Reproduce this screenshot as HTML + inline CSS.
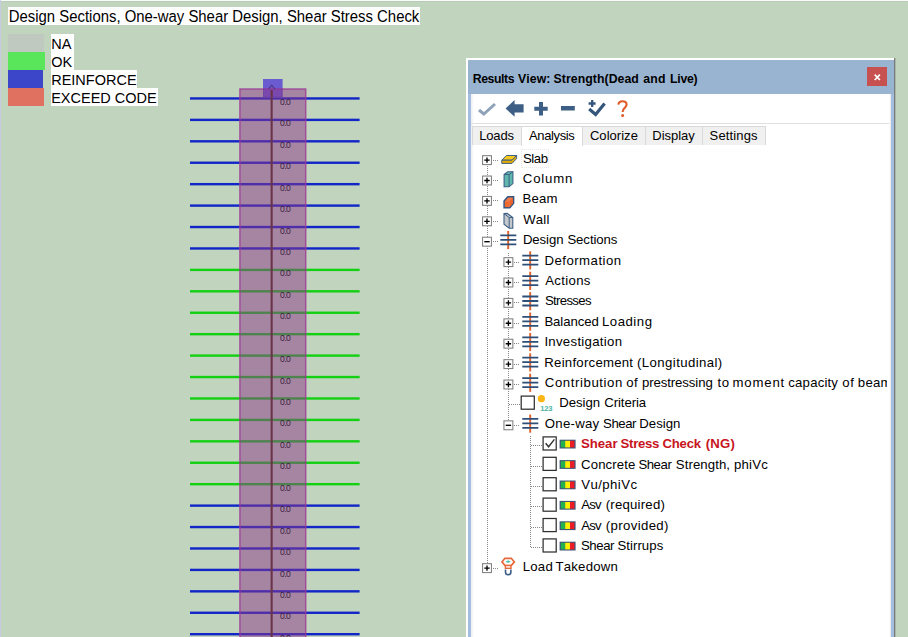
<!DOCTYPE html>
<html><head><meta charset="utf-8"><title>Results View</title>
<style>
html,body{margin:0;padding:0}
body{width:908px;height:637px;overflow:hidden;position:relative;background:#c1d4bd;font-family:"Liberation Sans",sans-serif;color:#000}
.abs{position:absolute}
.lbl{position:absolute;background:#fff;height:18px;white-space:nowrap;color:#000}
.lbl span{position:absolute;top:0;line-height:18px;transform:scaleY(1.05);transform-origin:0 55%}
.sw{position:absolute;left:8px;width:36px;height:18px}
.hl{position:absolute;left:190px;width:170px;height:2px}
.val{position:absolute;left:280px;font-size:8.6px;line-height:9px;color:#3a2040;letter-spacing:-0.6px}
#panel{position:absolute;left:466px;top:58px;width:430px;height:600px;background:#fff}
#pin{position:absolute;left:2px;top:2px;width:426px;height:600px;background:linear-gradient(#99b4d1 34px,#a3bedf 34px)}
#pbody{position:absolute;left:3px;top:34px;width:420px;height:570px;background:#fff;overflow:hidden}
.tw{position:absolute;top:11.6px;font-weight:bold;font-size:12.3px;line-height:14px;color:#000;white-space:nowrap;font-kerning:none}
#close{position:absolute;left:399px;top:7px;width:20px;height:19px;background:#c75050}
.tab{position:absolute;top:34px;height:18.5px;border:1px solid #d9d9d9;border-bottom:none;background:#f0f0f0;font-size:13px;line-height:17px;box-sizing:border-box;white-space:nowrap;color:#000}
.tt{position:absolute;font-size:13px;line-height:16px;white-space:nowrap;color:#000;font-kerning:none}
.t span,.twr span{position:absolute;top:0}
.t{position:absolute;font-kerning:none;font-size:13.2px;line-height:16px;height:16px;white-space:nowrap;color:#000}
.pm{position:absolute;width:8px;height:8px;border:1px solid #858585;background:#fff;box-sizing:content-box}
.pm i{position:absolute;left:1.4px;top:3.3px;width:5.2px;height:1.4px;background:#000}
.pm b{position:absolute;left:3.3px;top:1.4px;width:1.4px;height:5.2px;background:#000}
.cb{position:absolute;width:11.9px;height:11.9px;border:1.3px solid #3a3a3a;background:#fff}
.vd{position:absolute;width:1px;background-image:linear-gradient(#888 50%,rgba(0,0,0,0) 50%);background-size:1px 2px}
.hd{position:absolute;height:1px;background-image:linear-gradient(90deg,#888 50%,rgba(0,0,0,0) 50%);background-size:2px 1px}
svg{position:absolute;overflow:visible}
</style></head><body>

<div class="abs" style="left:0;top:0;width:908px;height:1px;background:#fafcfa"></div>
<div class="abs" style="left:0;top:1px;width:908px;height:1px;background:#b8cbb6"></div>
<div class="abs" style="left:0;top:0;width:1px;height:637px;background:#c6cde2"></div>
<div class="lbl" style="left:8px;top:7px;width:412px"><span style="left:0.8px;top:0.6px;font-size:14.9px">Design Sections, One-way Shear Design, Shear Stress Check</span></div>
<div class="sw" style="top:34px;background:#c0c9c0;width:36.4px"></div>
<div class="lbl" style="left:51px;top:34px;width:23px"><span style="left:0.2px;top:0.6px;font-size:14.5px">NA</span></div>
<div class="sw" style="top:52px;background:#5ae65a;width:37px"></div>
<div class="lbl" style="left:51px;top:52px;width:23px"><span style="left:0.2px;top:0.6px;font-size:14.5px">OK</span></div>
<div class="sw" style="top:70px;background:#3c46c8;width:35.3px"></div>
<div class="lbl" style="left:51px;top:70px;width:86px"><span style="left:0.2px;top:0.6px;font-size:14.5px">REINFORCE</span></div>
<div class="sw" style="top:88px;background:#e07060;width:36.4px"></div>
<div class="lbl" style="left:51px;top:88px;width:107px"><span style="left:0.2px;top:0.6px;font-size:14.5px">EXCEED CODE</span></div>
<svg style="left:0;top:0" width="908" height="637">
<rect x="190" y="97.25" width="169.6" height="2.4" fill="#1226c8"/>
<rect x="190" y="118.68" width="169.6" height="2.4" fill="#1226c8"/>
<rect x="190" y="140.11" width="169.6" height="2.4" fill="#1226c8"/>
<rect x="190" y="161.54" width="169.6" height="2.4" fill="#1226c8"/>
<rect x="190" y="182.97" width="169.6" height="2.4" fill="#1226c8"/>
<rect x="190" y="204.40" width="169.6" height="2.4" fill="#1226c8"/>
<rect x="190" y="225.83" width="169.6" height="2.4" fill="#1226c8"/>
<rect x="190" y="247.26" width="169.6" height="2.4" fill="#1226c8"/>
<rect x="190" y="268.69" width="169.6" height="2.4" fill="#12d012"/>
<rect x="190" y="290.12" width="169.6" height="2.4" fill="#12d012"/>
<rect x="190" y="311.55" width="169.6" height="2.4" fill="#12d012"/>
<rect x="190" y="332.98" width="169.6" height="2.4" fill="#12d012"/>
<rect x="190" y="354.41" width="169.6" height="2.4" fill="#12d012"/>
<rect x="190" y="375.84" width="169.6" height="2.4" fill="#12d012"/>
<rect x="190" y="397.27" width="169.6" height="2.4" fill="#12d012"/>
<rect x="190" y="418.70" width="169.6" height="2.4" fill="#12d012"/>
<rect x="190" y="440.13" width="169.6" height="2.4" fill="#12d012"/>
<rect x="190" y="461.56" width="169.6" height="2.4" fill="#12d012"/>
<rect x="190" y="482.99" width="169.6" height="2.4" fill="#12d012"/>
<rect x="190" y="504.42" width="169.6" height="2.4" fill="#1226c8"/>
<rect x="190" y="525.85" width="169.6" height="2.4" fill="#1226c8"/>
<rect x="190" y="547.28" width="169.6" height="2.4" fill="#1226c8"/>
<rect x="190" y="568.71" width="169.6" height="2.4" fill="#1226c8"/>
<rect x="190" y="590.14" width="169.6" height="2.4" fill="#1226c8"/>
<rect x="190" y="611.57" width="169.6" height="2.4" fill="#1226c8"/>
<rect x="190" y="633.00" width="169.6" height="2.4" fill="#1226c8"/>
<rect x="263" y="79" width="19.6" height="18.3" fill="#6a5cd0"/>
<rect x="239.9" y="89" width="65.8" height="560" fill="rgba(139,53,137,0.5)" stroke="rgba(158,58,150,0.8)" stroke-width="1.5"/>
<rect x="270.6" y="90" width="2.1" height="560" fill="#6a3448"/>
<path d="M268.6 89 L271.7 85.2 L274.8 89" fill="none" stroke="#56388c" stroke-width="1.2"/>
<rect x="263.5" y="89" width="18.6" height="7.8" fill="none" stroke="#6a3aa0" stroke-width="0.8" stroke-dasharray="1 1"/>
</svg>
<div class="val" style="top:98.0px">0.0</div>
<div class="val" style="top:119.4px">0.0</div>
<div class="val" style="top:140.9px">0.0</div>
<div class="val" style="top:162.3px">0.0</div>
<div class="val" style="top:183.7px">0.0</div>
<div class="val" style="top:205.1px">0.0</div>
<div class="val" style="top:226.6px">0.0</div>
<div class="val" style="top:248.0px">0.0</div>
<div class="val" style="top:269.4px">0.0</div>
<div class="val" style="top:290.9px">0.0</div>
<div class="val" style="top:312.3px">0.0</div>
<div class="val" style="top:333.7px">0.0</div>
<div class="val" style="top:355.2px">0.0</div>
<div class="val" style="top:376.6px">0.0</div>
<div class="val" style="top:398.0px">0.0</div>
<div class="val" style="top:419.4px">0.0</div>
<div class="val" style="top:440.9px">0.0</div>
<div class="val" style="top:462.3px">0.0</div>
<div class="val" style="top:483.7px">0.0</div>
<div class="val" style="top:505.2px">0.0</div>
<div class="val" style="top:526.6px">0.0</div>
<div class="val" style="top:548.0px">0.0</div>
<div class="val" style="top:569.5px">0.0</div>
<div class="val" style="top:590.9px">0.0</div>
<div class="val" style="top:612.3px">0.0</div>
<div class="val" style="top:633.8px">0.0</div>
<div id="panel"><div id="pin">
<div class="tw twr" style="left:0"><span style="left:4.78px;letter-spacing:-0.451px">Results</span> <span style="left:50.12px;letter-spacing:0.060px">View:</span> <span style="left:85.55px;letter-spacing:0.052px">Strength(Dead</span> <span style="left:175.34px;letter-spacing:0.102px">and</span> <span style="left:202.08px;letter-spacing:-0.293px">Live)</span></div>
<div id="close"><svg style="left:7px;top:6.5px" width="7" height="7"><path d="M0.7 0.6 L5.9 6 M5.9 0.6 L0.7 6" stroke="#fff" stroke-width="1.7" fill="none"/></svg></div>
<div id="pbody">
<div class="abs" style="left:0;top:0;width:2.5px;height:570px;background:linear-gradient(90deg,#eceef2,#fff)"></div>
<svg style="left:7px;top:9px" width="18" height="13"><path d="M1 7 L5.8 11 L17 1" fill="none" stroke="#8ea2ba" stroke-width="3"/></svg>
<svg style="left:34px;top:6px" width="19" height="17"><path d="M0.6 8.4 L9.6 0 L9.6 4.2 L18.6 4.2 L18.6 12.4 L9.6 12.4 L9.6 16.8 Z" fill="#3d5f86"/></svg>
<svg style="left:63px;top:8px" width="14" height="14"><path d="M7 0 V13.6 M0.3 6.8 H13.7" stroke="#3d5f86" stroke-width="4" fill="none"/></svg>
<svg style="left:90.20000000000005px;top:12.200000000000003px" width="14" height="5"><rect x="0" y="0" width="13.8" height="4.5" fill="#3d5f86"/></svg>
<svg style="left:117px;top:6px" width="18" height="16"><path d="M1.2 9 L7.6 14.4 L16.6 3.4" fill="none" stroke="#34557c" stroke-width="3.2"/><path d="M4.2 0 V7 M0.6 3.5 H7.6" stroke="#34557c" stroke-width="2.3" fill="none"/></svg>
<svg style="left:146px;top:6px" width="11" height="18"><path d="M1.4 4.6 C1.6 0.2 9.6 0 9.6 4.4 C9.6 7.6 5.6 8 5.6 12" fill="none" stroke="#e05a28" stroke-width="2.1"/><circle cx="5.6" cy="15.6" r="1.5" fill="#e05a28"/></svg>
<div class="abs" style="left:0;top:29.200000000000003px;width:420px;height:1.3px;background:#e0e0e0"></div>
<div class="tab" style="left:1.4px;width:50.0px;top:32px;"></div>
<div class="tt" style="left:8.13px;top:33px;transform:translateY(0.9px);letter-spacing:-0.121px">Loads</div>
<div class="tab" style="left:50.4px;width:61.6px;top:32px;background:#fff;height:19.5px;"></div>
<div class="tt" style="left:57.97px;top:33px;transform:translateY(0.9px);letter-spacing:-0.359px">Analysis</div>
<div class="tab" style="left:111.0px;width:64.0px;top:32px;"></div>
<div class="tt" style="left:118.94px;top:33px;transform:translateY(0.9px);letter-spacing:0.036px">Colorize</div>
<div class="tab" style="left:174.0px;width:58.2px;top:32px;"></div>
<div class="tt" style="left:181.33px;top:33px;transform:translateY(0.9px);letter-spacing:-0.039px">Display</div>
<div class="tab" style="left:231.2px;width:64.0px;top:32px;"></div>
<div class="tt" style="left:238.61px;top:33px;transform:translateY(0.9px);letter-spacing:0.141px">Settings</div>
<div class="vd" style="left:15.5px;top:66.1px;height:408.0px"></div>
<div class="vd" style="left:36.9px;top:158.6px;height:172.7px"></div>
<div class="vd" style="left:58.8px;top:342.2px;height:111.5px"></div>
<div class="hd" style="left:21.5px;top:65.6px;width:6.0px"></div>
<svg style="left:0;top:0;transform:translate(11.0px,61.1px)" width="10" height="10"><rect x="0.55" y="0.55" width="8.9" height="8.9" fill="#fff" stroke="#858585" stroke-width="1.1"/><path d="M5 2.3 V7.7 M2.3 5 H7.7" stroke="#000" stroke-width="1.35" fill="none"/></svg>
<svg style="left:0;top:0;transform:translate(30.0px,60.8px)" width="17" height="10"><path d="M0.8 5.4 L5.4 0.7 L15.6 0.7 L11 5.4 Z" fill="#f7c81c" stroke="#3d5f86" stroke-width="1"/><path d="M0.8 5.4 L11 5.4 L15.6 0.7 L15.6 3.8 L11 8.6 L0.8 8.6 Z" fill="#e6ae00" stroke="#3d5f86" stroke-width="1"/></svg>
<div class="t" style="left:0;top:56.6px;"><span style="left:51.90px;letter-spacing:-0.422px">Slab</span></div>
<div class="hd" style="left:21.5px;top:86.0px;width:6.0px"></div>
<svg style="left:0;top:0;transform:translate(11.0px,81.5px)" width="10" height="10"><rect x="0.55" y="0.55" width="8.9" height="8.9" fill="#fff" stroke="#858585" stroke-width="1.1"/><path d="M5 2.3 V7.7 M2.3 5 H7.7" stroke="#000" stroke-width="1.35" fill="none"/></svg>
<svg style="left:0;top:0;transform:translate(32.3px,77.0px)" width="11" height="17"><path d="M0.8 3.5 L4.5 0.8 L9.6 0.8 L9.6 12.6 L5.8 15.8 L0.8 15.8 Z" fill="#5fb8ae" stroke="#3d5f86" stroke-width="1.1"/><path d="M5.8 3.5 L5.8 15.8 M0.8 3.5 L5.8 3.5 L9.6 0.8" fill="none" stroke="#3d5f86" stroke-width="1"/></svg>
<div class="t" style="left:0;top:77.0px;"><span style="left:51.83px;letter-spacing:0.829px">Column</span></div>
<div class="hd" style="left:21.5px;top:106.4px;width:6.0px"></div>
<svg style="left:0;top:0;transform:translate(11.0px,101.9px)" width="10" height="10"><rect x="0.55" y="0.55" width="8.9" height="8.9" fill="#fff" stroke="#858585" stroke-width="1.1"/><path d="M5 2.3 V7.7 M2.3 5 H7.7" stroke="#000" stroke-width="1.35" fill="none"/></svg>
<svg style="left:0;top:0;transform:translate(32.2px,101.9px)" width="12" height="14"><path d="M0.9 5.2 L4.6 0.9 L10.4 0.9 L10.4 7.4 L6.6 11.9 L0.9 11.9 Z" fill="#f07a48" stroke="#335582" stroke-width="1.5"/><path d="M1.7 5.8 H6 V11.2 H1.7 Z" fill="#f06a30"/><path d="M6.6 5.4 L9.8 1.8 V7 L6.6 10.8 Z" fill="#e8602c"/></svg>
<div class="t" style="left:0;top:97.4px;"><span style="left:51.52px;letter-spacing:0.157px">Beam</span></div>
<div class="hd" style="left:21.5px;top:126.8px;width:6.0px"></div>
<svg style="left:0;top:0;transform:translate(11.0px,122.3px)" width="10" height="10"><rect x="0.55" y="0.55" width="8.9" height="8.9" fill="#fff" stroke="#858585" stroke-width="1.1"/><path d="M5 2.3 V7.7 M2.3 5 H7.7" stroke="#000" stroke-width="1.35" fill="none"/></svg>
<svg style="left:0;top:0;transform:translate(32.2px,118.6px)" width="11" height="17"><path d="M0.8 1 L4 0.8 L9.6 5 L9.6 15.6 L6 15.6 L0.8 11.6 Z" fill="#c4c8cc" stroke="#3d5f86" stroke-width="1.1"/><path d="M0.8 1 L6 5 L9.6 5 M6 5 V15.6" fill="none" stroke="#3d5f86" stroke-width="1"/></svg>
<div class="t" style="left:0;top:117.8px;"><span style="left:52.14px;letter-spacing:0.225px">Wall</span></div>
<div class="hd" style="left:21.5px;top:147.2px;width:6.0px"></div>
<svg style="left:0;top:0;transform:translate(11.0px,142.7px)" width="10" height="10"><rect x="0.55" y="0.55" width="8.9" height="8.9" fill="#fff" stroke="#858585" stroke-width="1.1"/><path d="M2.3 5 H7.7" stroke="#000" stroke-width="1.35" fill="none"/></svg>
<svg style="left:0;top:0;transform:translate(29.0px,136.9px)" width="17" height="19"><path d="M8.2 0 V18.2" stroke="#e0602a" stroke-width="1.9" fill="none"/><path d="M0.3 4.4 H16.3 M0.3 8.9 H16.3 M0.3 13.4 H16.3" stroke="#2f4f78" stroke-width="1.8" fill="none"/></svg>
<div class="t" style="left:0;top:138.2px;"><span style="left:51.92px;letter-spacing:-0.090px">Design</span> <span style="left:96.40px;letter-spacing:-0.079px">Sections</span></div>
<div class="hd" style="left:42.9px;top:167.6px;width:6.0px"></div>
<svg style="left:0;top:0;transform:translate(32.4px,163.1px)" width="10" height="10"><rect x="0.55" y="0.55" width="8.9" height="8.9" fill="#fff" stroke="#858585" stroke-width="1.1"/><path d="M5 2.3 V7.7 M2.3 5 H7.7" stroke="#000" stroke-width="1.35" fill="none"/></svg>
<svg style="left:0;top:0;transform:translate(51.0px,157.3px)" width="17" height="19"><path d="M8.2 0 V18.2" stroke="#e0602a" stroke-width="1.9" fill="none"/><path d="M0.3 4.4 H16.3 M0.3 8.9 H16.3 M0.3 13.4 H16.3" stroke="#2f4f78" stroke-width="1.8" fill="none"/></svg>
<div class="t" style="left:0;top:158.6px;"><span style="left:73.42px;letter-spacing:0.494px">Deformation</span></div>
<div class="hd" style="left:42.9px;top:188.0px;width:6.0px"></div>
<svg style="left:0;top:0;transform:translate(32.4px,183.5px)" width="10" height="10"><rect x="0.55" y="0.55" width="8.9" height="8.9" fill="#fff" stroke="#858585" stroke-width="1.1"/><path d="M5 2.3 V7.7 M2.3 5 H7.7" stroke="#000" stroke-width="1.35" fill="none"/></svg>
<svg style="left:0;top:0;transform:translate(51.0px,177.7px)" width="17" height="19"><path d="M8.2 0 V18.2" stroke="#e0602a" stroke-width="1.9" fill="none"/><path d="M0.3 4.4 H16.3 M0.3 8.9 H16.3 M0.3 13.4 H16.3" stroke="#2f4f78" stroke-width="1.8" fill="none"/></svg>
<div class="t" style="left:0;top:179.0px;"><span style="left:74.17px;letter-spacing:0.336px">Actions</span></div>
<div class="hd" style="left:42.9px;top:208.4px;width:6.0px"></div>
<svg style="left:0;top:0;transform:translate(32.4px,203.9px)" width="10" height="10"><rect x="0.55" y="0.55" width="8.9" height="8.9" fill="#fff" stroke="#858585" stroke-width="1.1"/><path d="M5 2.3 V7.7 M2.3 5 H7.7" stroke="#000" stroke-width="1.35" fill="none"/></svg>
<svg style="left:0;top:0;transform:translate(51.0px,198.1px)" width="17" height="19"><path d="M8.2 0 V18.2" stroke="#e0602a" stroke-width="1.9" fill="none"/><path d="M0.3 4.4 H16.3 M0.3 8.9 H16.3 M0.3 13.4 H16.3" stroke="#2f4f78" stroke-width="1.8" fill="none"/></svg>
<div class="t" style="left:0;top:199.4px;"><span style="left:73.90px;letter-spacing:-0.668px">Stresses</span></div>
<div class="hd" style="left:42.9px;top:228.8px;width:6.0px"></div>
<svg style="left:0;top:0;transform:translate(32.4px,224.3px)" width="10" height="10"><rect x="0.55" y="0.55" width="8.9" height="8.9" fill="#fff" stroke="#858585" stroke-width="1.1"/><path d="M5 2.3 V7.7 M2.3 5 H7.7" stroke="#000" stroke-width="1.35" fill="none"/></svg>
<svg style="left:0;top:0;transform:translate(51.0px,218.5px)" width="17" height="19"><path d="M8.2 0 V18.2" stroke="#e0602a" stroke-width="1.9" fill="none"/><path d="M0.3 4.4 H16.3 M0.3 8.9 H16.3 M0.3 13.4 H16.3" stroke="#2f4f78" stroke-width="1.8" fill="none"/></svg>
<div class="t" style="left:0;top:219.8px;"><span style="left:73.42px;letter-spacing:-0.087px">Balanced</span> <span style="left:130.92px;letter-spacing:0.526px">Loading</span></div>
<div class="hd" style="left:42.9px;top:249.2px;width:6.0px"></div>
<svg style="left:0;top:0;transform:translate(32.4px,244.7px)" width="10" height="10"><rect x="0.55" y="0.55" width="8.9" height="8.9" fill="#fff" stroke="#858585" stroke-width="1.1"/><path d="M5 2.3 V7.7 M2.3 5 H7.7" stroke="#000" stroke-width="1.35" fill="none"/></svg>
<svg style="left:0;top:0;transform:translate(51.0px,238.9px)" width="17" height="19"><path d="M8.2 0 V18.2" stroke="#e0602a" stroke-width="1.9" fill="none"/><path d="M0.3 4.4 H16.3 M0.3 8.9 H16.3 M0.3 13.4 H16.3" stroke="#2f4f78" stroke-width="1.8" fill="none"/></svg>
<div class="t" style="left:0;top:240.2px;"><span style="left:73.38px;letter-spacing:0.297px">Investigation</span></div>
<div class="hd" style="left:42.9px;top:269.6px;width:6.0px"></div>
<svg style="left:0;top:0;transform:translate(32.4px,265.1px)" width="10" height="10"><rect x="0.55" y="0.55" width="8.9" height="8.9" fill="#fff" stroke="#858585" stroke-width="1.1"/><path d="M5 2.3 V7.7 M2.3 5 H7.7" stroke="#000" stroke-width="1.35" fill="none"/></svg>
<svg style="left:0;top:0;transform:translate(51.0px,259.3px)" width="17" height="19"><path d="M8.2 0 V18.2" stroke="#e0602a" stroke-width="1.9" fill="none"/><path d="M0.3 4.4 H16.3 M0.3 8.9 H16.3 M0.3 13.4 H16.3" stroke="#2f4f78" stroke-width="1.8" fill="none"/></svg>
<div class="t" style="left:0;top:260.6px;"><span style="left:73.32px;letter-spacing:0.245px">Reinforcement</span> <span style="left:166.08px;letter-spacing:0.404px">(Longitudinal)</span></div>
<div class="hd" style="left:42.9px;top:290.0px;width:6.0px"></div>
<svg style="left:0;top:0;transform:translate(32.4px,285.5px)" width="10" height="10"><rect x="0.55" y="0.55" width="8.9" height="8.9" fill="#fff" stroke="#858585" stroke-width="1.1"/><path d="M5 2.3 V7.7 M2.3 5 H7.7" stroke="#000" stroke-width="1.35" fill="none"/></svg>
<svg style="left:0;top:0;transform:translate(51.0px,279.7px)" width="17" height="19"><path d="M8.2 0 V18.2" stroke="#e0602a" stroke-width="1.9" fill="none"/><path d="M0.3 4.4 H16.3 M0.3 8.9 H16.3 M0.3 13.4 H16.3" stroke="#2f4f78" stroke-width="1.8" fill="none"/></svg>
<div class="t" style="left:0;top:281.0px;"><span style="left:73.83px;letter-spacing:0.577px">Contribution</span> <span style="left:155.26px;letter-spacing:0.500px">of</span> <span style="left:170.95px;letter-spacing:-0.091px">prestressing</span> <span style="left:246.57px;letter-spacing:0.500px">to</span> <span style="left:261.52px;letter-spacing:0.818px">moment</span> <span style="left:317.34px;letter-spacing:0.180px">capacity</span> <span style="left:371.31px;letter-spacing:0.500px">of</span> <span style="left:386.85px;letter-spacing:0.201px">beam</span></div>
<div class="hd" style="left:38.4px;top:310.4px;width:11.0px"></div>
<svg style="left:0;top:0;transform:translate(49.5px,301.4px)" width="15" height="15"><rect x="0.7" y="0.7" width="13.1" height="13.1" fill="#fff" stroke="#303030" stroke-width="1.25"/></svg>
<svg style="left:0;top:0;transform:translate(66.70000000000005px,301.0px)" width="16" height="18"><circle cx="3.7" cy="3.7" r="3.6" fill="#fbb615"/></svg>
<div class="abs" style="left:69.30000000000004px;top:310.6px;font-size:7.6px;line-height:8px;font-weight:bold;color:#4db3a2;letter-spacing:-0.25px">123</div>
<div class="t" style="left:0;top:301.4px;"><span style="left:88.22px;letter-spacing:-0.050px">Design</span> <span style="left:133.23px;letter-spacing:-0.081px">Criteria</span></div>
<div class="hd" style="left:42.9px;top:330.8px;width:6.0px"></div>
<svg style="left:0;top:0;transform:translate(32.4px,326.3px)" width="10" height="10"><rect x="0.55" y="0.55" width="8.9" height="8.9" fill="#fff" stroke="#858585" stroke-width="1.1"/><path d="M2.3 5 H7.7" stroke="#000" stroke-width="1.35" fill="none"/></svg>
<svg style="left:0;top:0;transform:translate(51.0px,320.5px)" width="17" height="19"><path d="M8.2 0 V18.2" stroke="#e0602a" stroke-width="1.9" fill="none"/><path d="M0.3 4.4 H16.3 M0.3 8.9 H16.3 M0.3 13.4 H16.3" stroke="#2f4f78" stroke-width="1.8" fill="none"/></svg>
<div class="t" style="left:0;top:321.8px;"><span style="left:73.77px;letter-spacing:0.272px">One-way</span> <span style="left:132.10px;letter-spacing:-0.476px">Shear</span> <span style="left:168.32px;letter-spacing:-0.010px">Design</span></div>
<div class="hd" style="left:60.3px;top:351.2px;width:11.0px"></div>
<svg style="left:0;top:0;transform:translate(71.4px,342.2px)" width="15" height="15"><rect x="0.7" y="0.7" width="13.1" height="13.1" fill="#fff" stroke="#303030" stroke-width="1.25"/><path d="M3.2 7 L6.2 10.6 L12 3.2" fill="none" stroke="#333" stroke-width="1.4"/></svg>
<svg style="left:0;top:0;transform:translate(88.60000000000002px,345.7px)" width="16" height="9"><rect x="0" y="0" width="16" height="8.8" fill="#3f557a"/><rect x="1.2" y="1.1" width="4.4" height="6.6" fill="#22b14c"/><rect x="5.6" y="1.1" width="4.8" height="6.6" fill="#fff200"/><rect x="10.4" y="1.1" width="4.4" height="6.6" fill="#ed1c24"/></svg>
<div class="t" style="left:0;top:342.2px;font-weight:bold;color:#c8141e;"><span style="left:109.92px;letter-spacing:-0.002px">Shear</span> <span style="left:149.62px;letter-spacing:-0.328px">Stress</span> <span style="left:191.46px;letter-spacing:-0.223px">Check</span> <span style="left:234.64px;letter-spacing:0.274px">(NG)</span></div>
<div class="hd" style="left:60.3px;top:371.6px;width:11.0px"></div>
<svg style="left:0;top:0;transform:translate(71.4px,362.6px)" width="15" height="15"><rect x="0.7" y="0.7" width="13.1" height="13.1" fill="#fff" stroke="#303030" stroke-width="1.25"/></svg>
<svg style="left:0;top:0;transform:translate(88.60000000000002px,366.1px)" width="16" height="9"><rect x="0" y="0" width="16" height="8.8" fill="#3f557a"/><rect x="1.2" y="1.1" width="4.4" height="6.6" fill="#22b14c"/><rect x="5.6" y="1.1" width="4.8" height="6.6" fill="#fff200"/><rect x="10.4" y="1.1" width="4.4" height="6.6" fill="#ed1c24"/></svg>
<div class="t" style="left:0;top:362.6px;"><span style="left:110.03px;letter-spacing:0.128px">Concrete</span> <span style="left:167.40px;letter-spacing:-0.451px">Shear</span> <span style="left:204.80px;letter-spacing:0.090px">Strength,</span> <span style="left:262.95px;letter-spacing:0.220px">phiVc</span></div>
<div class="hd" style="left:60.3px;top:392.0px;width:11.0px"></div>
<svg style="left:0;top:0;transform:translate(71.4px,383.0px)" width="15" height="15"><rect x="0.7" y="0.7" width="13.1" height="13.1" fill="#fff" stroke="#303030" stroke-width="1.25"/></svg>
<svg style="left:0;top:0;transform:translate(88.60000000000002px,386.5px)" width="16" height="9"><rect x="0" y="0" width="16" height="8.8" fill="#3f557a"/><rect x="1.2" y="1.1" width="4.4" height="6.6" fill="#22b14c"/><rect x="5.6" y="1.1" width="4.8" height="6.6" fill="#fff200"/><rect x="10.4" y="1.1" width="4.4" height="6.6" fill="#ed1c24"/></svg>
<div class="t" style="left:0;top:383.0px;"><span style="left:110.34px;letter-spacing:0.411px">Vu/phiVc</span></div>
<div class="hd" style="left:60.3px;top:412.4px;width:11.0px"></div>
<svg style="left:0;top:0;transform:translate(71.4px,403.4px)" width="15" height="15"><rect x="0.7" y="0.7" width="13.1" height="13.1" fill="#fff" stroke="#303030" stroke-width="1.25"/></svg>
<svg style="left:0;top:0;transform:translate(88.60000000000002px,406.9px)" width="16" height="9"><rect x="0" y="0" width="16" height="8.8" fill="#3f557a"/><rect x="1.2" y="1.1" width="4.4" height="6.6" fill="#22b14c"/><rect x="5.6" y="1.1" width="4.8" height="6.6" fill="#fff200"/><rect x="10.4" y="1.1" width="4.4" height="6.6" fill="#ed1c24"/></svg>
<div class="t" style="left:0;top:403.4px;"><span style="left:110.27px;letter-spacing:-0.767px">Asv</span> <span style="left:134.78px;letter-spacing:0.213px">(required)</span></div>
<div class="hd" style="left:60.3px;top:432.8px;width:11.0px"></div>
<svg style="left:0;top:0;transform:translate(71.4px,423.8px)" width="15" height="15"><rect x="0.7" y="0.7" width="13.1" height="13.1" fill="#fff" stroke="#303030" stroke-width="1.25"/></svg>
<svg style="left:0;top:0;transform:translate(88.60000000000002px,427.3px)" width="16" height="9"><rect x="0" y="0" width="16" height="8.8" fill="#3f557a"/><rect x="1.2" y="1.1" width="4.4" height="6.6" fill="#22b14c"/><rect x="5.6" y="1.1" width="4.8" height="6.6" fill="#fff200"/><rect x="10.4" y="1.1" width="4.4" height="6.6" fill="#ed1c24"/></svg>
<div class="t" style="left:0;top:423.8px;"><span style="left:110.27px;letter-spacing:-0.767px">Asv</span> <span style="left:134.78px;letter-spacing:0.368px">(provided)</span></div>
<div class="hd" style="left:60.3px;top:453.2px;width:11.0px"></div>
<svg style="left:0;top:0;transform:translate(71.4px,444.2px)" width="15" height="15"><rect x="0.7" y="0.7" width="13.1" height="13.1" fill="#fff" stroke="#303030" stroke-width="1.25"/></svg>
<svg style="left:0;top:0;transform:translate(88.60000000000002px,447.7px)" width="16" height="9"><rect x="0" y="0" width="16" height="8.8" fill="#3f557a"/><rect x="1.2" y="1.1" width="4.4" height="6.6" fill="#22b14c"/><rect x="5.6" y="1.1" width="4.8" height="6.6" fill="#fff200"/><rect x="10.4" y="1.1" width="4.4" height="6.6" fill="#ed1c24"/></svg>
<div class="t" style="left:0;top:444.2px;"><span style="left:109.90px;letter-spacing:-0.401px">Shear</span> <span style="left:146.40px;letter-spacing:0.057px">Stirrups</span></div>
<div class="hd" style="left:21.5px;top:473.6px;width:6.0px"></div>
<svg style="left:0;top:0;transform:translate(11.0px,469.1px)" width="10" height="10"><rect x="0.55" y="0.55" width="8.9" height="8.9" fill="#fff" stroke="#858585" stroke-width="1.1"/><path d="M5 2.3 V7.7 M2.3 5 H7.7" stroke="#000" stroke-width="1.35" fill="none"/></svg>
<svg style="left:0;top:0;transform:translate(30.1px,463.1px)" width="16" height="20"><path d="M3.8 1.2 L10.2 1.2 L13.2 4.8 L10.2 8.4 L3.8 8.4 L0.9 4.8 Z" fill="#fff" stroke="#e8673a" stroke-width="1.7"/><path d="M4.4 4.6 L7 3.2 L9.6 4.6 L7 6 Z" fill="#4fc0b0"/><rect x="4.3" y="8.4" width="5.6" height="2.8" fill="#fff" stroke="#e8673a" stroke-width="1.4"/><path d="M4.4 12.4 V15 A2.7 2.7 0 0 0 9.8 15 V12.4" fill="none" stroke="#3d5f86" stroke-width="1.6"/></svg>
<div class="t" style="left:0;top:464.6px;"><span style="left:51.82px;letter-spacing:0.190px">Load</span> <span style="left:84.40px;letter-spacing:0.236px">Takedown</span></div>
<div class="abs" style="left:416.29999999999995px;top:40px;width:6px;height:560px;background:#fff"></div>
<div class="abs" style="left:417.5px;top:0;width:2.5px;height:570px;background:linear-gradient(90deg,#fff,#e8e8e8)"></div>
<div class="abs" style="left:50px;top:54.5px;width:28px;height:19.5px;border:1px dotted #e9e9e9;box-sizing:border-box"></div>
</div>
</div>
<div class="abs" style="left:428px;top:0;width:2px;height:600px;background:linear-gradient(90deg,#7a7a7a 1.5px,#a8b8a8 1.5px)"></div>
</div>
</body></html>
